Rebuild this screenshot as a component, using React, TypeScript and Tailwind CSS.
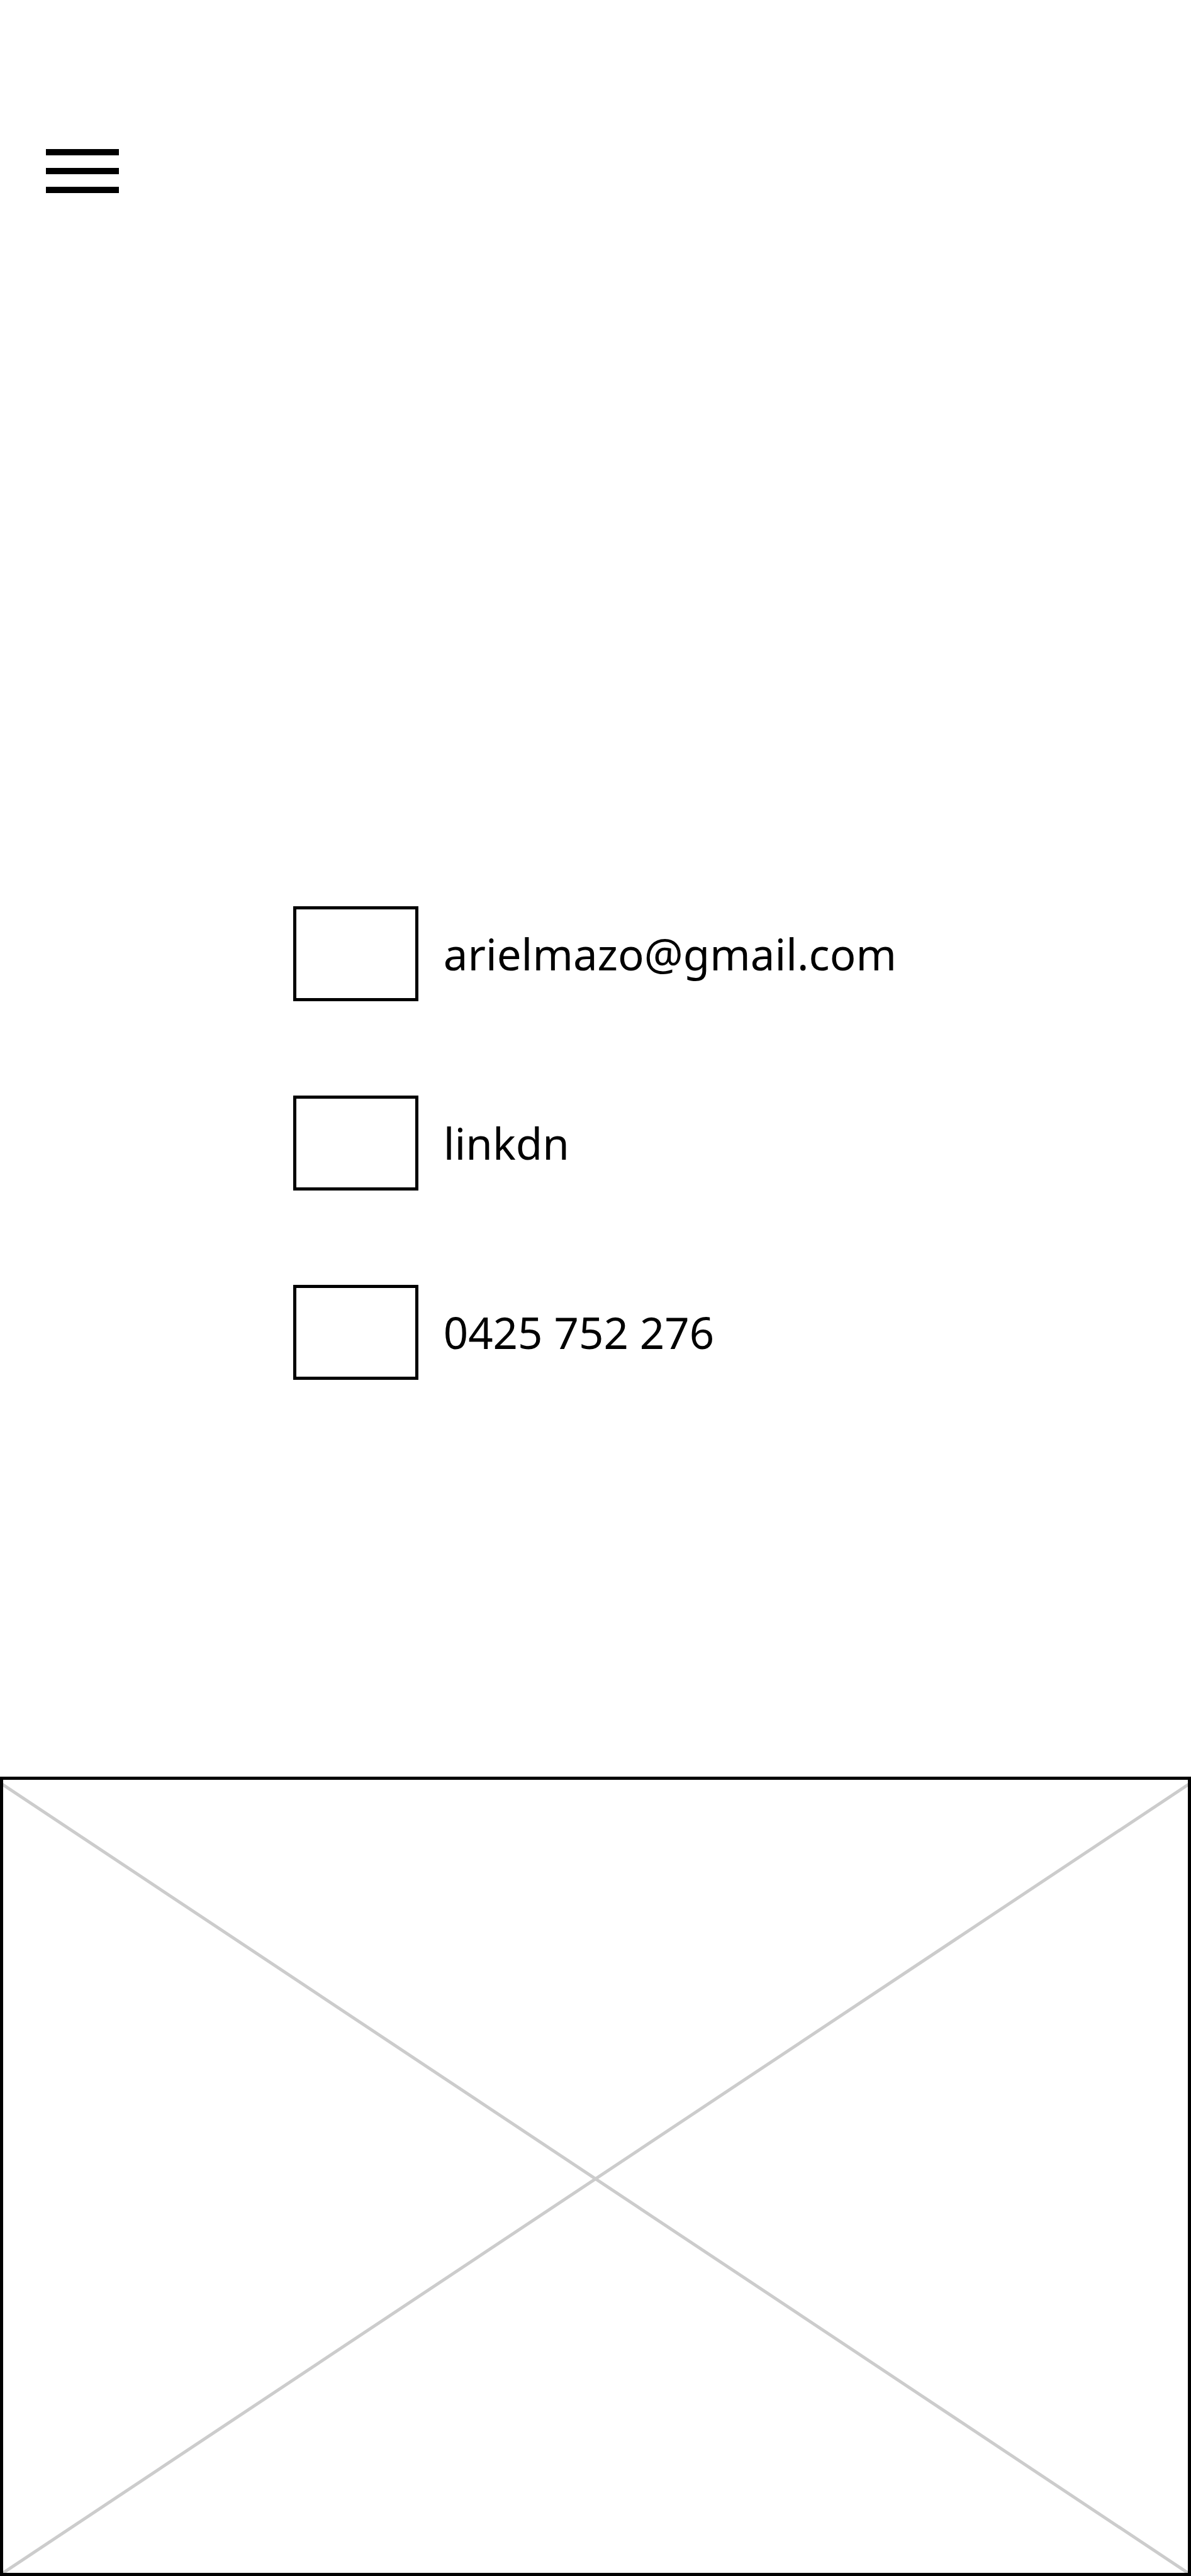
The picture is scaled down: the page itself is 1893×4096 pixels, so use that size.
import React from "react";

const contacts = [
  { label: "arielmazo@gmail.com", href: "mailto:arielmazo@gmail.com" },
  { label: "linkdn", href: "#linkdn" },
  { label: "0425 752 276", href: "tel:0425752276" },
];

export default function App() {
  return (
    <div className="flex min-h-screen flex-col bg-white text-black">
      <header className="px-[73px] pt-[237px]">
        <button type="button" aria-label="Open menu" className="flex w-[116px] flex-col gap-5">
          <span className="h-2.5 w-full bg-black" />
          <span className="h-2.5 w-full bg-black" />
          <span className="h-2.5 w-full bg-black" />
        </button>
      </header>

      <main className="flex grow flex-col">
        <ul className="mt-[1134px] mb-auto flex flex-col gap-[150px] pl-[24.6%]">
          {contacts.map((c) => (
            <li key={c.label}>
              <a
                href={c.href}
                className="flex items-center gap-10 font-['Noto_Sans',sans-serif] text-[69px] leading-none"
              >
                <span className="h-[151px] w-[199px] shrink-0 border-5 border-black" />
                <span>{c.label}</span>
              </a>
            </li>
          ))}
        </ul>

        <div className="aspect-[1893/1271] w-full border-5 border-black">
          <svg
            viewBox="0 0 1883 1261"
            preserveAspectRatio="none"
            className="block size-full"
            role="img"
            aria-label="Image placeholder"
          >
            <path d="M-15 -2L1898 1271M1898 -2L-15 1271" stroke="#cccccc" strokeWidth="5" fill="none" />
          </svg>
        </div>
      </main>
    </div>
  );
}
